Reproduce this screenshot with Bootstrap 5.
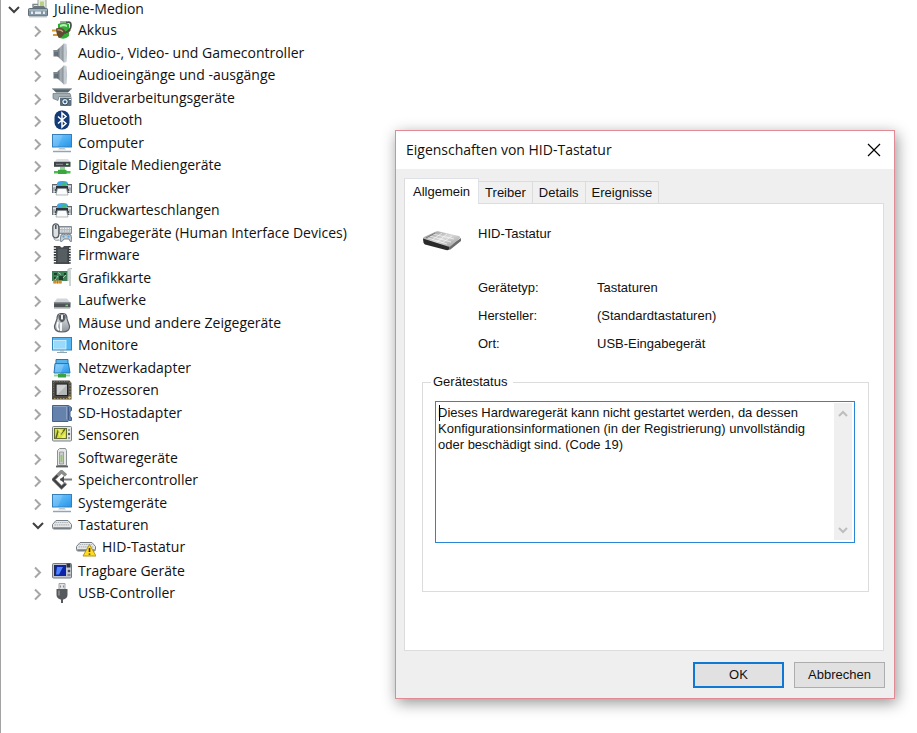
<!DOCTYPE html>
<html lang="de">
<head>
<meta charset="utf-8">
<meta name="viewport" content="width=device-width, initial-scale=1">
<title>Geräte-Manager</title>
<link href="https://cdn.jsdelivr.net/npm/bootstrap@5.3.0/dist/css/bootstrap.min.css" rel="stylesheet">
<style>
  body { font-family: "Open Sans", "Noto Sans", sans-serif; font-size: 14px; color: #111; background: #fff; }
  .manager { min-height: 100vh; border-left: 1px solid #a3a3a3; }
  .device-tree { flex: 0 0 394px; padding-left: 3px; }
  .tree-row { height: 22px; line-height: 22px; white-space: nowrap; }
  .tree-root { height: 18px; line-height: 18px; margin-bottom: 1px; }
  .branch { padding-left: 24px; }
  .branch > li:nth-child(odd) { padding-bottom: 1px; }
  .toggle { width: 20px; height: 20px; margin-right: 4px; }
  .ico { width: 20px; height: 20px; margin-right: 6px; flex: none; }
  .toggle svg { width: 20px; height: 20px; display: block; fill: none; stroke-width: 2; }

  .props { min-width: 440px; margin: 130px 22px 34px 0; border: 1px solid #e08a94; background: #efefef;
           box-shadow: 2px 4px 14px rgba(0,0,0,.42); font-family: "Liberation Sans", Arial, sans-serif; font-size: 13px; }
  .title-bar { height: 38px; padding: 0 13px 0 10px; font-family: "Open Sans", "Noto Sans", sans-serif; }
  .title-bar h1 { font-size: 14px; }
  .close-x svg { width: 14px; height: 14px; display: block; }
  .props-body { padding: 9px 9px 10px 8px; }
  .props .nav-tabs { border: 0; }
  .props .nav-link { height: 22px; line-height: 21px; padding: 0 6px; border: 1px solid #dcdcdc; border-left: 0; border-bottom: 0;
                     border-radius: 0; margin: 0; color: #111; background: #f0f0f0; }
  .props .nav-link.active { height: 26px; line-height: 22px; padding: 0 8px; margin-bottom: -1px; background: #fff; color: #111; border-left: 1px solid #dcdcdc; position: relative; }
  .sheet { border: 1px solid #dcdcdc; border-right-color: #d3e2e0; padding: 20px 14px 58px 17px; margin-right: 1px; }
  .device-head { gap: 17px; min-height: 66px; padding-left: 1px; }
  .facts { display: grid; grid-template-columns: 119px 1fr; row-gap: 8px; line-height: 20px; padding-left: 56px; margin-top: -12px; }
  .status { border: 1px solid #dcdcdc; height: 219px; margin-top: 19px; padding: 0 13px 0 12px; }
  .status legend { float: none; width: auto; font-size: 13px; line-height: 18px; padding: 0 6px 0 2px; margin: 0 0 10px -4px; background: #fff; }
  .status-box { border: 1px solid #2a86d4; height: 142px; padding: 1px 2px 2px 1px; }
  .status-box::before { content: ""; position: absolute; left: 3px; top: 3px; width: 1px; height: 16px; background: #000; }
  .status-box textarea { resize: none; overflow: hidden; outline: 0; line-height: 16px; padding: 2px 1px; color: #111; }
  .scroll-col { width: 18px; background: #efefef; }
  .scroll-col svg { width: 18px; height: 20px; display: block; fill: none; stroke: #bdbdbd; stroke-width: 2; }
  .props-foot { gap: 10px; margin-top: 11px; }
  .push { width: 91px; height: 26px; border: 1px solid #adadad; border-radius: 0; background: #e1e1e1; padding: 0; font-size: 13px; line-height: 24px; color: #111; }
  .push-default { border: 2px solid #0f78d4; line-height: 22px; }
</style>
<script src="https://cdn.jsdelivr.net/npm/bootstrap@5.3.0/dist/js/bootstrap.bundle.min.js"></script>
</head>
<body>
<svg width="0" height="0" class="position-absolute" aria-hidden="true">
  <defs>
    <linearGradient id="gBlue" x1="0" y1="0" x2="1" y2="1"><stop offset="0" stop-color="#7cc8fb"/><stop offset=".55" stop-color="#4aaef5"/><stop offset="1" stop-color="#2a92e4"/></linearGradient>
    <linearGradient id="gMetal" x1="0" y1="0" x2="1" y2="0"><stop offset="0" stop-color="#5b646b"/><stop offset=".5" stop-color="#aab2b8"/><stop offset="1" stop-color="#7d868d"/></linearGradient>
    <linearGradient id="gGrey" x1="0" y1="0" x2="0" y2="1"><stop offset="0" stop-color="#eceeef"/><stop offset="1" stop-color="#8b9399"/></linearGradient>
    <linearGradient id="gKeys" x1="0" y1="0" x2="1" y2="1"><stop offset="0" stop-color="#8e8e8e"/><stop offset=".5" stop-color="#d8d8d8"/><stop offset="1" stop-color="#9a9a9a"/></linearGradient>
  </defs>
  <symbol id="c-open" viewBox="0 0 20 20"><path d="M5 8l5 5 5-5" stroke="#404040"/></symbol>
  <symbol id="c-shut" viewBox="0 0 20 20"><path d="M7 6.500l5 5-5 5" stroke="#a6a6a6"/></symbol>

  <symbol id="i-root" viewBox="0 0 20 20">
    <path d="M10 0h8v10h-8z" fill="#e6ece0" stroke="#98a392"/><path d="M12 2.500h4v5h-4z" fill="#b9cf86"/>
    <path d="M3 10l3-3h10l2 3z" fill="#6b767d"/><path d="M5 8V5.500h5" fill="none" stroke="#7b868d" stroke-width="1.400"/>
    <rect x=".5" y="9.500" width="19" height="7.500" rx="1" fill="#8698a6" stroke="#5f6d77"/><path d="M1 11h18" stroke="#b8c8d4"/>
    <path d="M3 12.500h2V15H3zM7 12.500h6V15H7zM15 12.500h2V15h-2z" fill="#e3ebf0"/><path d="M1 18h18" stroke="#c5cacd"/>
  </symbol>
  <symbol id="i-akku" viewBox="0 0 20 20">
    <path d="M8 1h7v3H8z" fill="#a8b0a8"/><path d="M6 4q6-3 11 0v12q-5 5-11 1z" fill="#2fae35"/><path d="M8 5q4-2 7 0v2q-3-1.500-7 0z" fill="#b2efb2"/>
    <path d="M14 2.500q5-1.500 5 2.500t-3 6q-3 3-7 2" fill="none" stroke="#47504b" stroke-width="1.700"/>
    <path d="M0 10.500h6M1 15h6" stroke="#d39a38" stroke-width="2"/><path d="M4 8.500q6-2 9 2 0 6-6 7.500-3-4-3-9.500z" fill="#644a34"/><path d="M5.500 10q4-.5 5.500 2" stroke="#c5aa88" stroke-width="1.300" fill="none"/>
    <path d="M11 12.500q5 0 7-2.500" stroke="#5b4a3c" stroke-width="2" fill="none"/>
  </symbol>
  <symbol id="i-audio" viewBox="0 0 20 20">
    <path d="M1.500 7h4.500v6.500H1.500z" fill="#66727b"/><path d="M5.500 6.500L12 .5v19l-6.500-6z" fill="url(#gMetal)"/><path d="M11.500 .5h2q1.500 9 0 19h-2z" fill="#c3ccd2"/><path d="M14 1q1.200 9 0 18" stroke="#a5aeb5" fill="none" stroke-width=".7"/><path d="M1.500 8h4.500" stroke="#95a0a8"/>
  </symbol>
  <symbol id="i-image" viewBox="0 0 20 20">
    <path d="M0 .5h20l-4 4H4z" fill="#56656d"/><path d="M0 .8h20" stroke="#9dabb2"/><path d="M1 5.500h17l1 3H7l-1 4-5-2z" fill="#a2aeb4" stroke="#68757c" stroke-width=".7"/>
    <rect x="8" y="9" width="11.500" height="9" rx="1" fill="#5d7080"/><path d="M8 9.500h11.500" stroke="#b3c1ca"/><circle cx="13" cy="13.800" r="3.300" fill="#e4ebef" stroke="#34444f"/><circle cx="13" cy="13.800" r="1.400" fill="#2a5f94"/><path d="M17 11.500h2" stroke="#fff"/>
  </symbol>
  <symbol id="i-bt" viewBox="0 0 20 20">
    <rect x="2.500" y=".5" width="15" height="19" rx="7" fill="#153b76"/><path d="M6 6.500l8 7-4 3.500V3l4 3.500-8 7" fill="none" stroke="#fff" stroke-width="1.500"/>
  </symbol>
  <symbol id="i-pc" viewBox="0 0 20 20">
    <rect x=".5" y="1.500" width="19" height="12.500" fill="url(#gBlue)" stroke="#3580b8"/><path d="M1 2h10L6 13.500H1z" fill="#fff" opacity=".13"/>
    <path d="M8 14.500h4l2 2H6z" fill="#b8c6cf"/><path d="M1 18.500h18" stroke="#8fa6b5" stroke-width="1.500"/>
  </symbol>
  <symbol id="i-media" viewBox="0 0 20 20">
    <path d="M5 4h11l2.500 3.500H2z" fill="#dcdfe1"/><rect x="2" y="6.800" width="16.500" height="5" fill="#3f4447"/><path d="M4 9.300h7" stroke="#8b9195"/><path d="M14 9.300h2.500" stroke="#a8f2b8" stroke-width="1.500"/>
    <path d="M8 12h5v3H8z" fill="#8ed492"/><path d="M2 16h16.500v2.500H2z" fill="#4cba50"/><path d="M6 14.800h8.500V19H6z" fill="#3aa63f"/>
  </symbol>
  <symbol id="i-print" viewBox="0 0 20 20">
    <path d="M5 5q1-2 4-2h3q3 0 4 2v4H5z" fill="#3fa7e6"/><path d="M11 4q3 0 4 3h-5z" fill="#3ebb74"/>
    <path d="M0 6.500h5.500v8.500H0zM14.500 6.500H20v8.500h-5.500z" fill="#a9b0b4"/><path d="M0 6.500h5M15 6.500h5" stroke="#5d666b"/><path d="M1 8.500h3M16 8.500h3" stroke="#e3e6e8" stroke-width="1.500"/><path d="M.5 6.500V15M19.500 6.500V15" stroke="#697278"/>
    <path d="M4 8h12v3.500H4z" fill="#2f373c"/><path d="M3 11h14v4H3z" fill="#4b555b"/><path d="M5.500 10.500h9l1.500 6.500H4z" fill="#fbfbfb" stroke="#858d92" stroke-width=".6"/><path d="M1.500 13.500h2M16.500 13.500h2" stroke="#dce0e2"/>
  </symbol>
  <symbol id="i-hid" viewBox="0 0 20 20">
    <path d="M7 3.500h12.500v7H7z" fill="#b5bbc0" stroke="#858d93"/><path d="M8 5.500h11M8 8h11" stroke="#f4f4f4" stroke-dasharray="1.500 1"/>
    <rect x=".8" y=".8" width="6" height="14" rx="3" fill="#dce0e2" stroke="#555d63" stroke-width="1.300"/><path d="M3.800 2v4" stroke="#4c5358" stroke-width="1.500"/><path d="M2 15q0 3 5 2" fill="none" stroke="#858d93"/>
    <path d="M9 12q2-2 5 0 3-2 5 0l1 6q-2 2-3-2h-5q-2 4-4 2z" fill="#c5cdd3" stroke="#60707c" stroke-width=".8"/><path d="M10.500 13.500h2M15.500 13.500h2" stroke="#58a5dd" stroke-width="2"/>
  </symbol>
  <symbol id="i-firm" viewBox="0 0 20 20">
    <path d="M4 1h4q2 3 4 0h5v18H4z" fill="#454b4e"/><path d="M3 1v18M17.500 1v18" stroke="#34393c" stroke-width="2.400" stroke-dasharray="1.600 1.100"/><path d="M6 4h9v13H6z" fill="#575e61"/>
  </symbol>
  <symbol id="i-gpu" viewBox="0 0 20 20">
    <path d="M0 3h16v10H0z" fill="#3d8058"/><path d="M1 12.500h9v3H1z" fill="#e0a545"/><path d="M3 12.500v3M5.500 12.500v3M8 12.500v3" stroke="#9b7028" stroke-width=".8"/>
    <path d="M2 5h3v2H2zM7 8h4v4H7zM12 5h2v2h-2zM2 9h3v2H2z" fill="#1c3f2c"/><path d="M6 4.500l3 2M11 10l3-3M3 12l3-4" stroke="#9ad3a2"/><path d="M16 13V2q1-1.500 4-1.500M18 2v16" fill="none" stroke="#b8c3be" stroke-width="1.400"/>
  </symbol>
  <symbol id="i-drive" viewBox="0 0 20 20">
    <path d="M5 8.500h10l3.500 4.500h-17z" fill="#d3d6d8"/><path d="M2 12.500h16.500v5H2z" fill="#4d5356"/><path d="M2 13h16.500" stroke="#81898d"/><path d="M13.500 15.500h2.500" stroke="#54e354" stroke-width="1.600"/><path d="M2 18.500h16" stroke="#c5c9cb"/>
  </symbol>
  <symbol id="i-mouse" viewBox="0 0 20 20">
    <path d="M7 1q3-1 6 0 2 1 2 5l2.500 7q.5 6-7.500 6t-7.500-6L5 6q0-4 2-5z" fill="url(#gGrey)" stroke="#596068" stroke-width="1.200"/><path d="M6.500 2q-1 4 2.500 7h2q3.500-3 2.500-7" fill="#5b6166"/><rect x="8.500" y="1" width="3" height="6" rx="1.200" fill="#eef0f1" stroke="#24282b" stroke-width=".7"/><path d="M6 9q-2 6 1 8M9 10v8" stroke="#fff" fill="none" stroke-width="1.800"/>
  </symbol>
  <symbol id="i-mon" viewBox="0 0 20 20">
    <rect x=".5" y="2.500" width="19" height="12.500" fill="#55b8f4" stroke="#3282b9"/><rect x="1.500" y="5.500" width="12.500" height="8.500" fill="#97dafb" stroke="#e6f7ff" stroke-width=".7"/><path d="M8 15.500h4v1H8z" fill="#9cabb5"/><path d="M5 17.500h10" stroke="#8fa4b1"/>
  </symbol>
  <symbol id="i-net" viewBox="0 0 20 20">
    <path d="M4 1.500h12v9H4z" fill="#58b4ec" stroke="#2877ad"/><path d="M3 5.500h13.500l1.500 9.500H2z" fill="url(#gBlue)" stroke="#2877ad"/><path d="M4 6.500h8l-3 8H3z" fill="#fff" opacity=".2"/><path d="M8 15.500h4v1.500H8z" fill="#3c9644"/><path d="M2 16.500h16v2H2z" fill="#8ed698"/><path d="M6 16h8v3.500H6z" fill="#3d9e48"/>
  </symbol>
  <symbol id="i-cpu" viewBox="0 0 20 20">
    <path d="M0 .5h17.500L19.500 3v16.500H0z" fill="#4b4a46"/><path d="M18 2v16M2 18.500h16" stroke="#a7915b" stroke-dasharray="1.500 1.500"/><path d="M1.500 2v15M2 1.500h14" stroke="#77756e" stroke-dasharray="1 1.500"/><rect x="4" y="4" width="11.500" height="11.500" fill="#b4b6b8" stroke="#222"/><path d="M5 5h10L5 15z" fill="#dadcdd" opacity=".7"/><circle cx="17.500" cy="17.500" r="1.300" fill="#e6bd44"/>
  </symbol>
  <symbol id="i-sd" viewBox="0 0 20 20">
    <path d="M.5 2.500h16l3 2v3l-1.500 1v5l1.500 1v3H17l-1 1H.5z" fill="#6482ab" stroke="#46618a"/><path d="M1.500 3.500h13v13" fill="none" stroke="#87a1c4"/><path d="M16.500 4v13" stroke="#425c85"/>
  </symbol>
  <symbol id="i-sens" viewBox="0 0 20 20">
    <rect x=".5" y="1.500" width="19" height="14.500" rx="1" fill="#e3e6e6" stroke="#778082"/><rect x="2.500" y="3.500" width="12" height="10" fill="#d5df35" stroke="#656d32"/><path d="M4 13l2-7 3 3 4-5" fill="none" stroke="#5c6424" stroke-width="1.500"/><path d="M6 4l5 2-4 6zM9 13l4-5v5z" fill="#f3f57c" opacity=".8"/><path d="M16 5h2M16 13h2" stroke="#4f585a"/><circle cx="17" cy="9" r="1.200" fill="#4f585a"/>
  </symbol>
  <symbol id="i-soft" viewBox="0 0 20 20">
    <path d="M5.500 2.500l2-2h6l1 2v15h-9z" fill="#e6e8e7" stroke="#8a9190"/><path d="M7.500 4h4v12h-4z" fill="#c9ccca" stroke="#858b89" stroke-width=".7"/><path d="M9.500 7v7" stroke="#8ecb59" stroke-width="1.800"/><path d="M4 18.500h12" stroke="#5b6261" stroke-width="1.800"/>
  </symbol>
  <symbol id="i-store" viewBox="0 0 20 20">
    <path d="M14 5.500L9.500 1.500 1.500 9.500l8 8 4.500-4.500" fill="none" stroke="#8c8c8c" stroke-width="3.400"/><path d="M13.500 14l-4 3.500L1.500 9.500l4-4" fill="none" stroke="#3f3f3f" stroke-width="2.200"/><path d="M8 9.500h12" stroke="#7c7c7c" stroke-width="2"/><path d="M8 9.500l4-3.500v7z" fill="#4b4b4b"/>
  </symbol>
  <symbol id="i-keys" viewBox="0 0 20 20">
    <path d="M4 5.500h12l3.500 4v3q0 1.500-1.500 1.500H2q-1.500 0-1.500-1.500v-3z" fill="#e6e7e9" stroke="#777e83"/><path d="M3.500 7.500h13M2.500 9.800h15" stroke="#b0b5b8" stroke-width="1.200" stroke-dasharray="1.500 .7"/><path d="M1 12.300h18l-1 1.700H2z" fill="#777e83"/>
  </symbol>
  <symbol id="i-warn" viewBox="0 0 20 20">
    <use href="#i-keys" width="20" height="20"/><path d="M13.500 7.500L20 19H7z" fill="#ffdc22" stroke="#b3941a" stroke-linejoin="round"/><path d="M13.500 11v4M13.500 16.500v1.300" stroke="#3c3208" stroke-width="1.600"/>
  </symbol>
  <symbol id="i-port" viewBox="0 0 20 20">
    <rect x=".5" y="2.500" width="19" height="14.500" rx="1" fill="#c3c7ce" stroke="#747982"/><rect x="2.500" y="4.500" width="11" height="10" fill="#0f24a5" stroke="#222a52"/><path d="M5 6h6l-4 7.500H4z" fill="#4c84ff"/><path d="M14.500 2.500h4v4h-4z" fill="#30343c"/><circle cx="17" cy="10" r="1.300" fill="#454a55"/><path d="M15.500 14h3" stroke="#454a55"/>
  </symbol>
  <symbol id="i-usb" viewBox="0 0 20 20">
    <path d="M7 .5h6v6H7z" fill="#e1e3e4" stroke="#a0a4a6"/><path d="M8.500 2.500v2M11.500 2.500v2" stroke="#878b8d"/><path d="M4.500 6h11v6q0 3-4 4.500h-3Q4.500 15 4.500 12z" fill="#565a5c"/><path d="M7 7.500v5" stroke="#8e9294" stroke-width="1.500"/><path d="M10 16v4" stroke="#565a5c" stroke-width="2"/>
  </symbol>
</svg>

<main class="manager d-flex align-items-start">
  <nav class="device-tree" aria-label="Geräte">
    <ul class="list-unstyled mb-0">
      <li>
        <div class="tree-row tree-root d-flex align-items-center"><button class="toggle btn p-0 border-0" aria-label="Zuklappen"><svg><use href="#c-open"/></svg></button><svg class="ico"><use href="#i-root"/></svg>Juline-Medion</div>
        <ul class="branch list-unstyled mb-0">
          <li><div class="tree-row d-flex align-items-center"><button class="toggle btn p-0 border-0" aria-label="Aufklappen"><svg><use href="#c-shut"/></svg></button><svg class="ico"><use href="#i-akku"/></svg>Akkus</div></li>
          <li><div class="tree-row d-flex align-items-center"><button class="toggle btn p-0 border-0" aria-label="Aufklappen"><svg><use href="#c-shut"/></svg></button><svg class="ico"><use href="#i-audio"/></svg>Audio-, Video- und Gamecontroller</div></li>
          <li><div class="tree-row d-flex align-items-center"><button class="toggle btn p-0 border-0" aria-label="Aufklappen"><svg><use href="#c-shut"/></svg></button><svg class="ico"><use href="#i-audio"/></svg>Audioeingänge und -ausgänge</div></li>
          <li><div class="tree-row d-flex align-items-center"><button class="toggle btn p-0 border-0" aria-label="Aufklappen"><svg><use href="#c-shut"/></svg></button><svg class="ico"><use href="#i-image"/></svg>Bildverarbeitungsgeräte</div></li>
          <li><div class="tree-row d-flex align-items-center"><button class="toggle btn p-0 border-0" aria-label="Aufklappen"><svg><use href="#c-shut"/></svg></button><svg class="ico"><use href="#i-bt"/></svg>Bluetooth</div></li>
          <li><div class="tree-row d-flex align-items-center"><button class="toggle btn p-0 border-0" aria-label="Aufklappen"><svg><use href="#c-shut"/></svg></button><svg class="ico"><use href="#i-pc"/></svg>Computer</div></li>
          <li><div class="tree-row d-flex align-items-center"><button class="toggle btn p-0 border-0" aria-label="Aufklappen"><svg><use href="#c-shut"/></svg></button><svg class="ico"><use href="#i-media"/></svg>Digitale Mediengeräte</div></li>
          <li><div class="tree-row d-flex align-items-center"><button class="toggle btn p-0 border-0" aria-label="Aufklappen"><svg><use href="#c-shut"/></svg></button><svg class="ico"><use href="#i-print"/></svg>Drucker</div></li>
          <li><div class="tree-row d-flex align-items-center"><button class="toggle btn p-0 border-0" aria-label="Aufklappen"><svg><use href="#c-shut"/></svg></button><svg class="ico"><use href="#i-print"/></svg>Druckwarteschlangen</div></li>
          <li><div class="tree-row d-flex align-items-center"><button class="toggle btn p-0 border-0" aria-label="Aufklappen"><svg><use href="#c-shut"/></svg></button><svg class="ico"><use href="#i-hid"/></svg>Eingabegeräte (Human Interface Devices)</div></li>
          <li><div class="tree-row d-flex align-items-center"><button class="toggle btn p-0 border-0" aria-label="Aufklappen"><svg><use href="#c-shut"/></svg></button><svg class="ico"><use href="#i-firm"/></svg>Firmware</div></li>
          <li><div class="tree-row d-flex align-items-center"><button class="toggle btn p-0 border-0" aria-label="Aufklappen"><svg><use href="#c-shut"/></svg></button><svg class="ico"><use href="#i-gpu"/></svg>Grafikkarte</div></li>
          <li><div class="tree-row d-flex align-items-center"><button class="toggle btn p-0 border-0" aria-label="Aufklappen"><svg><use href="#c-shut"/></svg></button><svg class="ico"><use href="#i-drive"/></svg>Laufwerke</div></li>
          <li><div class="tree-row d-flex align-items-center"><button class="toggle btn p-0 border-0" aria-label="Aufklappen"><svg><use href="#c-shut"/></svg></button><svg class="ico"><use href="#i-mouse"/></svg>Mäuse und andere Zeigegeräte</div></li>
          <li><div class="tree-row d-flex align-items-center"><button class="toggle btn p-0 border-0" aria-label="Aufklappen"><svg><use href="#c-shut"/></svg></button><svg class="ico"><use href="#i-mon"/></svg>Monitore</div></li>
          <li><div class="tree-row d-flex align-items-center"><button class="toggle btn p-0 border-0" aria-label="Aufklappen"><svg><use href="#c-shut"/></svg></button><svg class="ico"><use href="#i-net"/></svg>Netzwerkadapter</div></li>
          <li><div class="tree-row d-flex align-items-center"><button class="toggle btn p-0 border-0" aria-label="Aufklappen"><svg><use href="#c-shut"/></svg></button><svg class="ico"><use href="#i-cpu"/></svg>Prozessoren</div></li>
          <li><div class="tree-row d-flex align-items-center"><button class="toggle btn p-0 border-0" aria-label="Aufklappen"><svg><use href="#c-shut"/></svg></button><svg class="ico"><use href="#i-sd"/></svg>SD-Hostadapter</div></li>
          <li><div class="tree-row d-flex align-items-center"><button class="toggle btn p-0 border-0" aria-label="Aufklappen"><svg><use href="#c-shut"/></svg></button><svg class="ico"><use href="#i-sens"/></svg>Sensoren</div></li>
          <li><div class="tree-row d-flex align-items-center"><button class="toggle btn p-0 border-0" aria-label="Aufklappen"><svg><use href="#c-shut"/></svg></button><svg class="ico"><use href="#i-soft"/></svg>Softwaregeräte</div></li>
          <li><div class="tree-row d-flex align-items-center"><button class="toggle btn p-0 border-0" aria-label="Aufklappen"><svg><use href="#c-shut"/></svg></button><svg class="ico"><use href="#i-store"/></svg>Speichercontroller</div></li>
          <li><div class="tree-row d-flex align-items-center"><button class="toggle btn p-0 border-0" aria-label="Aufklappen"><svg><use href="#c-shut"/></svg></button><svg class="ico"><use href="#i-pc"/></svg>Systemgeräte</div></li>
          <li><div class="tree-row d-flex align-items-center"><button class="toggle btn p-0 border-0" aria-label="Zuklappen"><svg><use href="#c-open"/></svg></button><svg class="ico"><use href="#i-keys"/></svg>Tastaturen</div>
            <ul class="branch list-unstyled mb-0">
              <li><div class="tree-row d-flex align-items-center ps-4"><svg class="ico"><use href="#i-warn"/></svg>HID-Tastatur</div></li>
            </ul>
          </li>
          <li><div class="tree-row d-flex align-items-center"><button class="toggle btn p-0 border-0" aria-label="Aufklappen"><svg><use href="#c-shut"/></svg></button><svg class="ico"><use href="#i-port"/></svg>Tragbare Geräte</div></li>
          <li><div class="tree-row d-flex align-items-center"><button class="toggle btn p-0 border-0" aria-label="Aufklappen"><svg><use href="#c-shut"/></svg></button><svg class="ico"><use href="#i-usb"/></svg>USB-Controller</div></li>
        </ul>
      </li>
    </ul>
  </nav>

  <section class="props flex-grow-1" role="dialog" aria-labelledby="props-title">
    <header class="title-bar d-flex align-items-center justify-content-between bg-white">
      <h1 id="props-title" class="fw-normal mb-0">Eigenschaften von HID-Tastatur</h1>
      <button class="close-x btn p-0 border-0" aria-label="Schließen"><svg viewBox="0 0 14 14"><path d="M1 1l12 12M13 1L1 13" stroke="#000" stroke-width="1.200"/></svg></button>
    </header>
    <div class="props-body">
      <div class="nav nav-tabs align-items-end" role="tablist">
        <button class="nav-link active" role="tab" aria-selected="true">Allgemein</button>
        <button class="nav-link" role="tab" aria-selected="false">Treiber</button>
        <button class="nav-link" role="tab" aria-selected="false">Details</button>
        <button class="nav-link" role="tab" aria-selected="false">Ereignisse</button>
      </div>
      <div class="sheet bg-white" role="tabpanel">
        <div class="device-head d-flex align-items-start">
          <svg width="38" height="32" viewBox="0 0 38 32" aria-hidden="true">
            <path d="M0 14l26 8v3.500q-1 1-3 .5L2 20.500q-2-1-2-6.500z" fill="#2b2b2b"/><path d="M26 22l12-8v3L28 25q-1 1-2 .5z" fill="#6c6c6c"/>
            <path d="M0 14.500q0-1 2-2L12 8q2-1 4-.5l20 4.500q2 1 1 2l-9 8q-1 1-3 .5z" fill="url(#gKeys)"/>
            <path d="M10 10l21 5M7 12l21 6M5 14l19 6M9 16l10-7M14 18l10-8M19 19l10-7" stroke="#fff" stroke-width=".8" opacity=".75"/><path d="M3 14l9-5" stroke="#686868" stroke-width=".8"/>
          </svg>
          <div>HID-Tastatur</div>
        </div>
        <dl class="facts mb-0">
          <dt class="fw-normal">Gerätetyp:</dt><dd class="mb-0">Tastaturen</dd>
          <dt class="fw-normal">Hersteller:</dt><dd class="mb-0">(Standardtastaturen)</dd>
          <dt class="fw-normal">Ort:</dt><dd class="mb-0">USB-Eingabegerät</dd>
        </dl>
        <fieldset class="status">
          <legend>Gerätestatus</legend>
          <div class="status-box d-flex position-relative bg-white">
            <textarea class="flex-grow-1 border-0 bg-transparent" aria-label="Gerätestatus" readonly>Dieses Hardwaregerät kann nicht gestartet werden, da dessen Konfigurationsinformationen (in der Registrierung) unvollständig oder beschädigt sind. (Code 19)</textarea>
            <div class="scroll-col d-flex flex-column justify-content-between">
              <button class="btn p-0 border-0" aria-label="Nach oben"><svg viewBox="0 0 18 20"><path d="M5 13l4-4 4 4"/></svg></button>
              <button class="btn p-0 border-0" aria-label="Nach unten"><svg viewBox="0 0 18 20"><path d="M5 8l4 4 4-4"/></svg></button>
            </div>
          </div>
        </fieldset>
      </div>
      <div class="props-foot d-flex justify-content-end">
        <button class="push push-default btn">OK</button>
        <button class="push btn">Abbrechen</button>
      </div>
    </div>
  </section>
</main>
</body>
</html>
